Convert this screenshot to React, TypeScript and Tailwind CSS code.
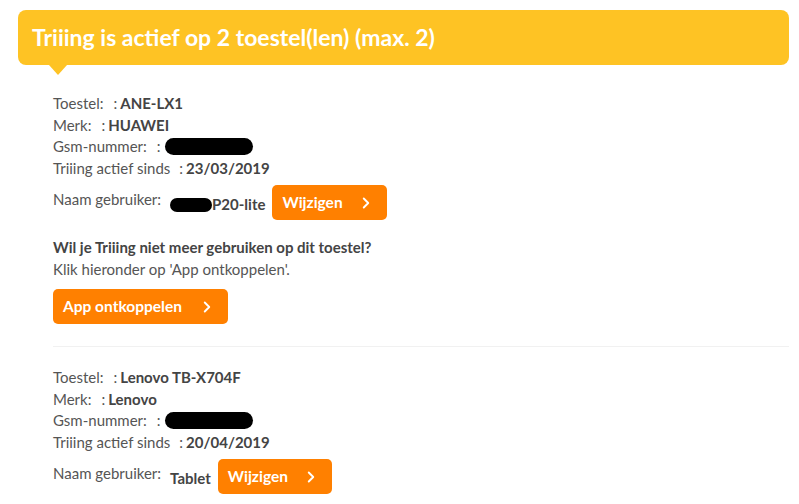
import { ChevronRight } from "lucide-react";

type Device = {
  toestel: string;
  merk: string;
  sinds: string;
  naam: string;
  naamRedacted?: boolean;
};

const devices: Device[] = [
  { toestel: "ANE-LX1", merk: "HUAWEI", sinds: "23/03/2019", naam: "P20-lite", naamRedacted: true },
  { toestel: "Lenovo TB-X704F", merk: "Lenovo", sinds: "20/04/2019", naam: "Tablet" },
];

function Scribble({ className }: { className: string }) {
  return <span className={`inline-block rounded-full bg-black ${className}`} />;
}

function OrangeButton({ label, gap }: { label: string; gap: string }) {
  return (
    <button
      type="button"
      className="flex h-[35px] items-center rounded-[5px] bg-[#ff8000] pl-[10px] pr-[12px] text-[15.5px] font-bold text-white"
    >
      <span>{label}</span>
      <ChevronRight className={gap} size={18} strokeWidth={2.5} />
    </button>
  );
}

function DeviceBlock({ device }: { device: Device }) {
  return (
    <div className="leading-[21.5px]">
      <div className="flex">
        <span>Toestel:</span>
        <span className="ml-[10px]">: </span>
        <span className="ml-[3px] font-bold text-[#444]">{device.toestel}</span>
      </div>
      <div className="flex">
        <span>Merk:</span>
        <span className="ml-[10px]">: </span>
        <span className="ml-[3px] font-bold text-[#444]">{device.merk}</span>
      </div>
      <div className="flex items-center">
        <span>Gsm-nummer:</span>
        <span className="ml-[10px]">:</span>
        <Scribble className="ml-[4px] h-[17px] w-[88px]" />
      </div>
      <div className="flex">
        <span>Triiing actief sinds</span>
        <span className="ml-[9px]">: </span>
        <span className="ml-[3px] font-bold text-[#444]">{device.sinds}</span>
      </div>
      <div className="mt-[6px] flex items-center">
        <span className="mb-[5px]">Naam gebruiker:</span>
        <span className="ml-[9px] mt-[5px] flex items-center font-bold text-[#444]">
          {device.naamRedacted && <Scribble className="h-[14px] w-[42px]" />}
          {device.naam}
        </span>
        <div className="ml-[7px]">
          <OrangeButton label="Wijzigen" gap="ml-[14px]" />
        </div>
      </div>
    </div>
  );
}

export default function App() {
  return (
    <div
      className="min-h-screen bg-white pl-[18px] pr-[10px] pt-[10px] text-[15px] text-[#555]"
      style={{ fontFamily: 'Lato, "Liberation Sans", sans-serif' }}
    >
      <div className="relative">
        <div className="flex h-[55px] items-center rounded-[8px] bg-[#fec324] pl-[14px]">
          <h1 className="text-[23px] font-bold text-white">
            Triiing is actief op 2 toestel(len) (max. 2)
          </h1>
        </div>
        <div className="absolute left-[31px] top-[55px] h-0 w-0 border-x-[9px] border-t-[10px] border-x-transparent border-t-[#fec324]" />
      </div>

      <div className="pl-[35px] pt-[28px]">
        <DeviceBlock device={devices[0]} />

        <div className="mt-[16px] leading-[22px]">
          <p className="font-bold text-[#444]">Wil je Triiing niet meer gebruiken op dit toestel?</p>
          <p>Klik hieronder op 'App ontkoppelen'.</p>
        </div>
        <div className="mt-[9px] flex">
          <OrangeButton label="App ontkoppelen" gap="ml-[16px]" />
        </div>

        <div className="mt-[22px] border-t border-[#f1f1f1]" />

        <div className="pt-[20px]">
          <DeviceBlock device={devices[1]} />
        </div>
      </div>
    </div>
  );
}
